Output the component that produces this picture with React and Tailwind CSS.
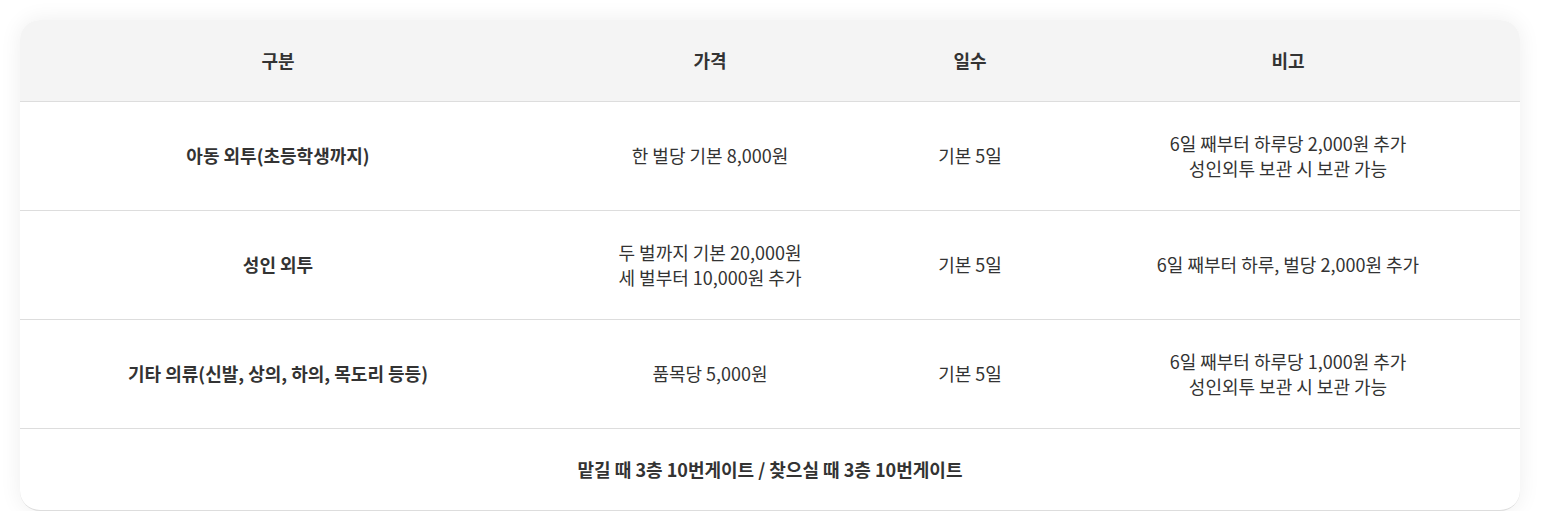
const ROWS = [
  {
    name: "아동 외투(초등학생까지)",
    price: ["한 벌당 기본 8,000원"],
    days: "기본 5일",
    note: ["6일 째부터 하루당 2,000원 추가", "성인외투 보관 시 보관 가능"],
  },
  {
    name: "성인 외투",
    price: ["두 벌까지 기본 20,000원", "세 벌부터 10,000원 추가"],
    days: "기본 5일",
    note: ["6일 째부터 하루, 벌당 2,000원 추가"],
  },
  {
    name: "기타 의류(신발, 상의, 하의, 목도리 등등)",
    price: ["품목당 5,000원"],
    days: "기본 5일",
    note: ["6일 째부터 하루당 1,000원 추가", "성인외투 보관 시 보관 가능"],
  },
];

export default function App() {
  return (
    <div
      className="min-h-[511px] bg-white pl-5 pt-5 text-[#333] text-[18px]"
      style={{ fontFamily: '"Noto Sans CJK KR", "Noto Sans", sans-serif' }}
    >
      <div className="w-[1500px] rounded-[20px] overflow-hidden bg-white shadow-[0_0_22px_rgba(0,0,0,0.07)] border-b border-[#ddd]">
        <table className="w-full table-fixed border-collapse text-center leading-[25px]">
          <colgroup>
            <col className="w-[516px]" />
            <col className="w-[348px]" />
            <col className="w-[172px]" />
            <col />
          </colgroup>
          <thead>
            <tr className="h-[81px] bg-[#f4f4f4] border-b border-[#ddd]">
              <th className="font-bold">구분</th>
              <th className="font-bold">가격</th>
              <th className="font-bold">일수</th>
              <th className="font-bold">비고</th>
            </tr>
          </thead>
          <tbody>
            {ROWS.map((row) => (
              <tr key={row.name} className="h-[109px] border-b border-[#ddd]">
                <td className="font-bold">{row.name}</td>
                <td>
                  {row.price.map((line) => (
                    <div key={line}>{line}</div>
                  ))}
                </td>
                <td>{row.days}</td>
                <td>
                  {row.note.map((line) => (
                    <div key={line}>{line}</div>
                  ))}
                </td>
              </tr>
            ))}
            <tr className="h-[82px]">
              <td colSpan={4} className="font-bold">
                맡길 때 3층 10번게이트 / 찾으실 때 3층 10번게이트
              </td>
            </tr>
          </tbody>
        </table>
      </div>
    </div>
  );
}
